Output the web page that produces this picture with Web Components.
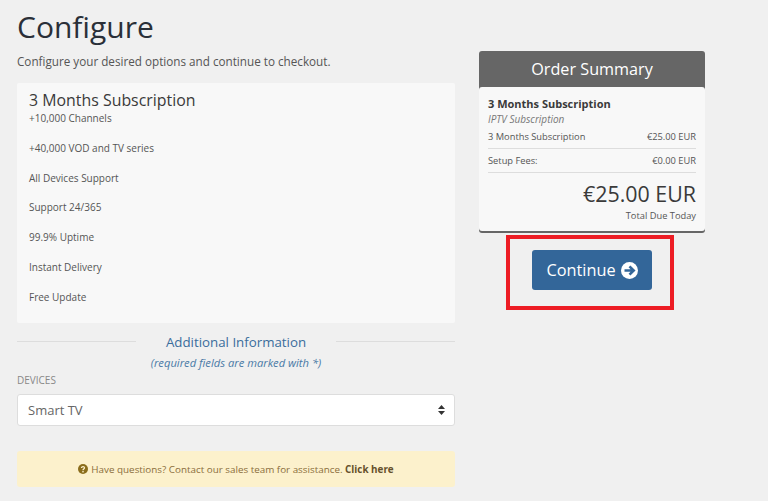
<!DOCTYPE html>
<html>
<head>
<meta charset="utf-8">
<title>Configure</title>
<style>
  html, body { margin: 0; height: 501px; overflow: hidden; }
  body { background: #f0f0f0; font-family: "Open Sans", sans-serif; color: #333; }
</style>
</head>
<body>
<config-page>
  <product-box slot="product" name="3 Months Subscription">
    <p>+10,000 Channels</p>
    <p>+40,000 VOD and TV series</p>
    <p>All Devices Support</p>
    <p>Support 24/365</p>
    <p>99.9% Uptime</p>
    <p>Instant Delivery</p>
    <p>Free Update</p>
  </product-box>
  <order-summary slot="summary"></order-summary>
</config-page>

<script>
class ConfigPage extends HTMLElement {
  constructor() {
    super();
    this.attachShadow({ mode: "open" });
    this.shadowRoot.innerHTML = `
    <style>
      :host { display: grid; grid-template-columns: 438px 226px; column-gap: 24px; padding: 0 17px; position: relative; height: 501px; box-sizing: border-box; align-items: start; }
      h1 { margin: 0; padding-top: 7px; font-size: 30px; line-height: 40px; font-weight: 400; color: #2a2f38; }
      .lead { margin: 6px 0 14px; font-size: 11.700px; line-height: 16px; color: #555; }
      .right { padding-top: 51px; display: flex; flex-direction: column; align-items: center; }
      .divider { display: flex; align-items: center; margin-top: 9px; height: 20px; }
      .divider i { flex: none; width: 119px; height: 1px; background: #ddd; margin-top: -1px; }
      .divider span { flex: 1; text-align: center; font-size: 13.300px; color: #3a6d9c; }
      .note { margin: 3px 0 0; text-align: center; font-size: 11.200px; line-height: 16px; font-style: italic; color: #4a7aa6; }
      label { display: block; margin-top: 2px; font-size: 10px; line-height: 14px; color: #888; }
      .select { margin-top: 7px; height: 32px; box-sizing: border-box; border: 1px solid #ddd; border-radius: 3px; background: #fff; display: flex; align-items: center; justify-content: space-between; padding: 0 9px 0 10px; font-size: 13px; color: #666; }
      .select svg { width: 7px; height: 10px; }
      .help { margin-top: 25px; height: 36px; border-radius: 3px; background: #fcf1cc; display: flex; align-items: center; justify-content: center; gap: 3px; font-size: 9.850px; color: #8a6d3b; }
      .help svg { width: 10px; height: 10px; }
      .help b { color: #66512c; font-weight: 700; }
      .btn { margin-top: 17px; width: 120px; height: 40px; box-sizing: border-box; background: #336699; border-radius: 3px; color: #fff; font-size: 16.300px; display: flex; align-items: center; justify-content: center; gap: 5px; }
      .btn svg { width: 17px; height: 17px; }
      .mark { position: absolute; left: 506px; top: 235px; width: 168px; height: 75px; box-sizing: border-box; border: 4px solid #ed1c24; }
    </style>
    <div>
      <h1>Configure</h1>
      <p class="lead">Configure your desired options and continue to checkout.</p>
      <slot name="product"></slot>
      <div class="divider"><i></i><span>Additional Information</span><i></i></div>
      <p class="note">(required fields are marked with *)</p>
      <label>DEVICES</label>
      <div class="select">Smart TV
        <svg viewBox="0 0 7 10"><path fill="#333" d="M3.500 0 7 4H0zM0 6h7l-3.500 4z"/></svg>
      </div>
      <div class="help">
        <svg viewBox="0 0 10 10"><circle cx="5" cy="5" r="5" fill="#8a6d1b"/><path fill="none" stroke="#fcf1cc" stroke-width="1.300" d="M3.500 4C3.500 2 6.600 2.200 6.500 3.900 6.400 5 5 5 5 6.200"/><rect x="4.300" y="7" width="1.400" height="1.400" fill="#fcf1cc"/></svg>
        <span>Have questions? Contact our sales team for assistance. <b>Click here</b></span>
      </div>
    </div>
    <div class="right">
      <slot name="summary"></slot>
      <div class="btn">Continue
        <svg viewBox="0 0 17 17"><circle cx="8.500" cy="8.500" r="8.500" fill="#fff"/><path fill="none" stroke="#336699" stroke-width="2.600" d="M3.500 8.500h8.500M8.500 4.300l4.200 4.200-4.200 4.200"/></svg>
      </div>
    </div>
    <div class="mark"></div>
    `;
  }
}

class ProductBox extends HTMLElement {
  constructor() {
    super();
    this.attachShadow({ mode: "open" });
    this.shadowRoot.innerHTML = `
    <style>
      :host { display: block; height: 240px; box-sizing: border-box; padding: 7px 12px; background: #f8f8f8; border-radius: 2px; }
      h2 { margin: 0; font-size: 15.900px; line-height: 20px; font-weight: 400; color: #3a3a3a; }
      ::slotted(p) { margin: 0 0 13.800px; font-size: 10px; line-height: 16px; color: #555; }
    </style>
    <h2>${this.getAttribute("name")}</h2>
    <slot></slot>
    `;
  }
}

class OrderSummary extends HTMLElement {
  constructor() {
    super();
    this.attachShadow({ mode: "open" });
    this.shadowRoot.innerHTML = `
    <style>
      :host { display: block; width: 226px; background: #666; border-radius: 3px; padding-bottom: 2px; }
      h2 { margin: 0; height: 36px; line-height: 36px; text-align: center; font-size: 16.200px; font-weight: 400; color: #fff; }
      .body { background: #f8f8f8; border-radius: 3px; padding: 9px 9px 6px; height: 144px; box-sizing: border-box; }
      .name { font-size: 11px; line-height: 16px; font-weight: 700; color: #3a3a3a; }
      .cat { font-size: 10px; line-height: 14px; font-style: italic; color: #777; }
      .row { display: flex; justify-content: space-between; font-size: 9.300px; line-height: 13px; color: #555; padding: 5px 0 5px; border-bottom: 1px solid #ddd; }
      .cat + .row { padding-top: 4px; }
      .total { text-align: right; font-size: 21.400px; line-height: 28px; margin-top: 7px; color: #3a3a3a; }
      .due { text-align: right; font-size: 9.300px; line-height: 13px; margin-top: 1px; color: #555; }
    </style>
    <h2>Order Summary</h2>
    <div class="body">
      <div class="name">3 Months Subscription</div>
      <div class="cat">IPTV Subscription</div>
      <div class="row"><span>3 Months Subscription</span><span>€25.00 EUR</span></div>
      <div class="row"><span>Setup Fees:</span><span>€0.00 EUR</span></div>
      <div class="total">€25.00 EUR</div>
      <div class="due">Total Due Today</div>
    </div>
    `;
  }
}

customElements.define("config-page", ConfigPage);
customElements.define("product-box", ProductBox);
customElements.define("order-summary", OrderSummary);
</script>
</body>
</html>
